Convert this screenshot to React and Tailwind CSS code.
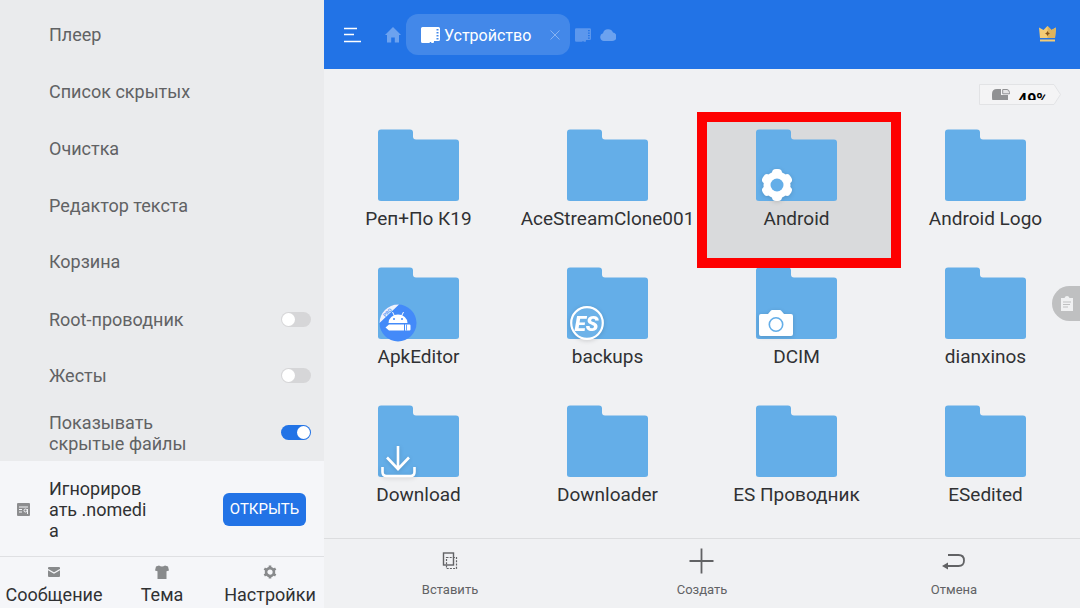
import React, { useState } from "react";

const menuItems = ["Плеер", "Список скрытых", "Очистка", "Редактор текста", "Корзина"];

const folders = [
  { name: "Реп+По К19" },
  { name: "AceStreamClone001" },
  { name: "Android", badge: "gear", selected: true },
  { name: "Android Logo" },
  { name: "ApkEditor", badge: "apk" },
  { name: "backups", badge: "es" },
  { name: "DCIM", badge: "camera" },
  { name: "dianxinos" },
  { name: "Download", badge: "download" },
  { name: "Downloader" },
  { name: "ES Проводник" },
  { name: "ESedited" },
];

const Badge = ({ type }) => {
  if (type === "gear") {
    return (
      <svg viewBox="0 0 32 34" className="absolute left-[5px] top-[39px] h-[34px] w-8 drop-shadow-sm">
        <g fill="#fff">
          <circle cx="16" cy="17" r="13.500" />
          <rect x="11" y="1" width="10" height="32" rx="4" />
          <rect x="11" y="1" width="10" height="32" rx="4" transform="rotate(60 16 17)" />
          <rect x="11" y="1" width="10" height="32" rx="4" transform="rotate(-60 16 17)" />
        </g>
        <circle cx="16" cy="17" r="6.500" fill="#64aee8" />
      </svg>
    );
  }
  if (type === "apk") {
    return (
      <svg viewBox="0 0 38 38" className="absolute left-px top-[37px] h-[38px] w-[38px]">
        <circle cx="19" cy="19" r="18.500" fill="#438af9" />
        <path d="M.5 19A18.500 18.500 0 0 1 19 .5h1z" fill="#eff3fb" />
        <text x="9" y="10" fontSize="5" fontWeight="700" fontFamily="Roboto, sans-serif" textAnchor="middle" fill="#5b9bf5" transform="rotate(-45 9 9)">PRO</text>
        <path d="M9.500 19a9.500 8.500 0 0 1 19 0z" fill="#fff" />
        <path d="M13.500 8l2 4M24.500 8l-2 4" stroke="#fff" strokeWidth="1" />
        <circle cx="15" cy="15" r="1" fill="#438af9" />
        <circle cx="23" cy="15" r="1" fill="#438af9" />
        <path d="M6.500 23.500L10 20.500h15v6H10z M26 20.500h4.500q1 0 1 1v4q0 1-1 1H26z" fill="#fff" />
        <path d="M25.500 20.500v6M27.500 20.500v6" stroke="#438af9" strokeWidth=".8" />
      </svg>
    );
  }
  if (type === "es") {
    return (
      <svg viewBox="0 0 36 36" className="absolute left-[2px] top-[38px] h-9 w-9 drop-shadow-sm">
        <circle cx="18" cy="18" r="15.800" fill="#6db2e8" stroke="#fff" strokeWidth="2.200" />
        <text x="17.500" y="25.500" fontSize="21" fontWeight="900" fontStyle="italic" fontFamily="Roboto, sans-serif" textAnchor="middle" fill="#fff">ES</text>
      </svg>
    );
  }
  if (type === "camera") {
    return (
      <svg viewBox="0 0 34 28" className="absolute left-[3px] top-[42px] h-7 w-[34px] drop-shadow-sm">
        <path fill="#fff" d="M2 5h7l3-3.500Q12.500 1 13 1h8q.5 0 1 .5L25 5h7q2 0 2 2v18q0 2-2 2H2q-2 0-2-2V7q0-2 2-2z" />
        <circle cx="17" cy="15.500" r="6.700" fill="none" stroke="#64aee8" strokeWidth="1.600" />
      </svg>
    );
  }
  return (
    <svg viewBox="0 0 36 34" className="absolute left-[2px] top-[39px] h-[34px] w-9 drop-shadow-sm" fill="none" stroke="#fff" strokeWidth="2.600">
      <path d="M18 2v23M7 13.500l11 11.500 11-11.500" />
      <path d="M2.500 23v5q0 4 4 4h24q4 0 4-4v-5" />
    </svg>
  );
};

const Folder = ({ folder }) => (
  <button
    type="button"
    className={
      folder.selected
        ? "relative flex h-[138px] flex-col items-center bg-[#d9dadc] pt-2"
        : "relative flex h-[138px] flex-col items-center pt-2"
    }
  >
    <span className="relative block">
      <svg viewBox="0 0 81 72" className="h-[72px] w-[81px]">
        <path
          fill="#64aee8"
          d="M3 .5h29q3 0 3 3v4q0 3 3 3h40q3 0 3 3v56q0 2.500-3 2.500H3q-3 0-3-2.500v-66q0-3 3-3z"
        />
      </svg>
      {folder.badge && <Badge type={folder.badge} />}
    </span>
    <span className="mt-1.5 whitespace-nowrap text-[19px] leading-6 text-[#303133]">{folder.name}</span>
    {folder.selected && (
      <span className="absolute -bottom-[9px] -left-[5px] -right-2.5 -top-[9px] z-10 border-10 border-[#fe0000]" />
    )}
  </button>
);

const ToggleRow = ({ id, label, on }) => {
  const [checked, setChecked] = useState(on);

  return (
    <li className="flex flex-1 items-center justify-between pr-[13px]">
      <label htmlFor={id} className="w-[150px] leading-[21px]">
        {label}
      </label>
      <input
        id={id}
        type="checkbox"
        checked={checked}
        onChange={(e) => setChecked(e.target.checked)}
        className="h-[15px] w-[30px] cursor-pointer appearance-none rounded-full bg-[#d6d6d8] p-px before:block before:h-[13px] before:w-[13px] before:rounded-full before:bg-white checked:bg-[#2273e6] checked:before:ml-[15px]"
      />
    </li>
  );
};

const SdCard = ({ className }) => (
  <svg viewBox="0 0 19 16" className={className} fill="currentColor">
    <path
      fillRule="evenodd"
      d="M1.500 0h16q1.500 0 1.500 1.500v11q0 1.500-1.500 1.500H13v1q0 1-1 1h-1q-1 0-1-1H9q0 1-1 1H1.500Q0 16 0 14.500v-13Q0 0 1.500 0zM15.500 2v1.500h2V2zm0 3v1.500h2V5zm0 3v1.500h2V8zm0 3v1.500h2V11z"
    />
  </svg>
);

const SmallGear = () => (
  <svg viewBox="0 0 32 32" className="h-3.5 w-3.5" fill="none" stroke="#888a8c">
    <circle cx="16" cy="16" r="9" strokeWidth="6" />
    <path d="M16 1v5M16 26v5M3 8.500l4.500 2.500M24.500 21l4.500 2.500M29 8.500L24.500 11M7.500 21L3 23.500" strokeWidth="6" />
  </svg>
);

const Sidebar = () => (
  <aside className="flex w-[30%] shrink-0 flex-col bg-[#eaebed]">
    <ul className="flex flex-1 flex-col pl-[49px] pt-[7px] text-lg text-[#616264]">
      {menuItems.map((item) => (
        <li key={item} className="flex flex-1 items-center">
          <button type="button">{item}</button>
        </li>
      ))}
      <ToggleRow id="root" label="Root-проводник" on={false} />
      <ToggleRow id="gestures" label="Жесты" on={false} />
      <ToggleRow id="hidden" label="Показывать скрытые файлы" on={true} />
    </ul>

    {/* nomedia */}
    <div className="flex h-[95px] items-center bg-[#f5f6f9] pl-[17px] pr-[18px] pt-px">
      <svg viewBox="0 0 13 13" className="h-[13px] w-[13px] shrink-0">
        <rect width="13" height="13" rx="1" fill="#8c8d8f" />
        <path d="M2 4h9M2 6.500h3M2 9h3M10.500 6v5" stroke="#f5f6f9" />
        <circle cx="8.500" cy="7.500" r="1.500" fill="none" stroke="#f5f6f9" />
      </svg>
      <p className="ml-[19px] w-[98px] break-all text-lg leading-[21px] text-[#303133]">
        Игнорировать .nomedia
      </p>
      <button type="button" className="ml-auto h-[33px] w-[83px] rounded-md bg-[#2273e6] text-[15px] text-white">
        ОТКРЫТЬ
      </button>
    </div>

    <nav className="grid h-[52px] grid-cols-3 border-t-1 border-[#dfe0e3] bg-[#f5f6f9] text-lg leading-6 text-[#303133]">
      <button type="button" className="flex flex-col items-center pt-2">
        <svg viewBox="0 0 12 10" className="h-3.5 w-3">
          <rect width="12" height="10" rx="1" fill="#888a8c" />
          <path d="M0 2.500l6 3.500 6-3.500" fill="none" stroke="#f5f6f9" strokeWidth="1.200" />
        </svg>
        <span className="mt-1">Сообщение</span>
      </button>
      <button type="button" className="flex flex-col items-center pt-2">
        <svg viewBox="0 0 14 14" className="h-3.5 w-3.5">
          <path d="M4 .5q3 2 6 0l3 1 1 4-2.500.7V14h-9V6.200L0 5.500l1-4z" fill="#888a8c" />
        </svg>
        <span className="mt-1">Тема</span>
      </button>
      <button type="button" className="flex flex-col items-center pt-2">
        <SmallGear />
        <span className="mt-1">Настройки</span>
      </button>
    </nav>
  </aside>
);

const Header = () => (
  <header className="flex h-[69px] shrink-0 items-center bg-[#2273e6] pl-5 pr-6 text-white">
    <button type="button" aria-label="Меню">
      <svg viewBox="0 0 17 16" className="h-4 w-[17px]" stroke="currentColor" strokeWidth="1.500">
        <path d="M0 1.500h13M0 7.500h10M0 14.500h17" />
      </svg>
    </button>
    <button type="button" aria-label="Домой" className="ml-6 text-[#6ca2ef]">
      <svg viewBox="0 0 16 16" className="h-4 w-4" fill="currentColor">
        <path d="M8 0l8 8h-2v7.500H9.800v-5H6.200v5H2V8H0z" />
      </svg>
    </button>
    <div className="ml-[5px] flex h-[41px] w-[164px] items-center rounded-xl bg-[#4388e9] pl-[15px] pr-2.5">
      <SdCard className="h-4 w-[19px]" />
      <span className="ml-1 pt-0.5 text-base">Устройство</span>
      <button type="button" aria-label="Закрыть" className="ml-auto">
        <svg viewBox="0 0 10 10" className="h-2.5 w-2.5" stroke="#86b3f2" fill="none">
          <path d="M.5.5l9 9M9.500.5l-9 9" />
        </svg>
      </button>
    </div>
    <button type="button" aria-label="SD-карта" className="ml-[5px] text-[#5c97ed]">
      <SdCard className="h-3.5 w-4" />
    </button>
    <button type="button" aria-label="Облако" className="ml-[9px] text-[#6ca2ef]">
      <svg viewBox="0 0 16 14" className="h-3.5 w-4" fill="currentColor">
        <path d="M4 13a4 4 0 0 1-1-7.800A5.300 5.300 0 0 1 13 4.500 4.300 4.300 0 0 1 11.500 13z" />
      </svg>
    </button>
    <button type="button" aria-label="Премиум" className="ml-auto">
      <svg viewBox="0 0 17 16" className="mb-0.5 h-4 w-[17px]">
        <path d="M0 1.500l4.500 2.500L8.500 0l4 4L17 1.500 16 12H1z" fill="#f3cc76" />
        <path d="M8.500 0l4 4L17 1.500 16 12H8.500z" fill="#deb35c" />
        <path d="M1 13.500h15V15.500H1z" fill="#f3cc76" />
        <path d="M8.500 5L10 7.500 8.500 10 7 7.500z" fill="#865419" />
        <path d="M6.500 7.500h4" stroke="#865419" />
      </svg>
    </button>
  </header>
);

const StorageBadge = () => (
  <div className="flex h-[52px] shrink-0 justify-end pr-[19px] pt-[15px]">
    <div className="relative h-[21px] w-[82px]">
      <svg viewBox="0 0 82 21" className="absolute inset-0 h-full w-full">
        <path d="M.5.5H75l6.500 10L75 20.500H.5z" fill="#f4f4f5" stroke="#e2e3e5" />
      </svg>
      <div className="relative flex h-4 items-start overflow-hidden pl-[13px] pt-[5px]">
        <svg viewBox="0 0 18 14" className="h-3.5 w-[18px] shrink-0">
          <path d="M9 0v6h7v8H4Q0 14 0 8V5q0-5 5-5z" fill="#909193" />
          <path d="M10.700.5H15q2 0 2.500 3v1.300h-6.800z" fill="#e4e4e5" stroke="#909193" />
        </svg>
        <span className="ml-2 mt-px text-base font-bold leading-5 text-black">49%</span>
      </div>
    </div>
  </div>
);

const Toolbar = () => (
  <footer className="grid h-[70px] shrink-0 grid-cols-3 border-t-1 border-[#dcdddf] text-[13px] leading-4 text-[#616264]">
    <button type="button" className="flex flex-col items-center pt-[9px]">
      <span className="flex h-[26px] items-center">
        <svg viewBox="0 0 16 18" className="h-[18px] w-4" fill="none" stroke="currentColor">
          <rect x="1.500" y="1" width="10" height="12" strokeWidth="1.400" />
          <rect x="4.500" y="5.500" width="10" height="11" strokeWidth="1.200" strokeDasharray="2 1.200" />
        </svg>
      </span>
      <span className="mt-2">Вставить</span>
    </button>
    <button type="button" className="flex flex-col items-center pt-[9px]">
      <svg viewBox="0 0 26 26" className="h-[26px] w-[26px]" stroke="currentColor" strokeWidth="1.800">
        <path d="M12.500.5v25M.5 13h24" />
      </svg>
      <span className="mt-2">Создать</span>
    </button>
    <button type="button" className="flex flex-col items-center pt-[9px]">
      <span className="flex h-[26px] items-center">
        <svg viewBox="0 0 26 18" className="h-[18px] w-[26px]" fill="none" stroke="currentColor">
          <path d="M7 3h10.500q5.500 0 5.500 5.500T17.500 14H5" strokeWidth="1.800" />
          <path d="M1 14l6-3.500v7z" fill="currentColor" stroke="none" />
        </svg>
      </span>
      <span className="mt-2">Отмена</span>
    </button>
  </footer>
);

const App = () => {
  return (
    <div className="flex min-h-screen font-[Roboto,sans-serif]">
      <Sidebar />
      <main className="relative flex min-w-0 flex-1 flex-col bg-[#f0f1f3]">
        <Header />
        <StorageBadge />
        <div className="grid flex-1 grid-cols-4 content-start">
          {folders.map((folder) => (
            <Folder key={folder.name} folder={folder} />
          ))}
        </div>
        <Toolbar />

        {/* clipboard handle on the right edge */}
        <button
          type="button"
          aria-label="Буфер обмена"
          className="absolute right-0 top-[286px] flex h-[35px] w-7 items-center rounded-l-full bg-[#bfc0c1] pl-[9px]"
        >
          <svg viewBox="0 0 12 15" className="h-[15px] w-3">
            <path d="M0 2h3.500Q4 0 6 0t2.500 2H12v13H0z" fill="#f0f1f2" />
            <path d="M2 6h8M2 8.500h7M2 11h5" stroke="#bfc0c1" />
          </svg>
        </button>
      </main>
    </div>
  );
};

export default App;
